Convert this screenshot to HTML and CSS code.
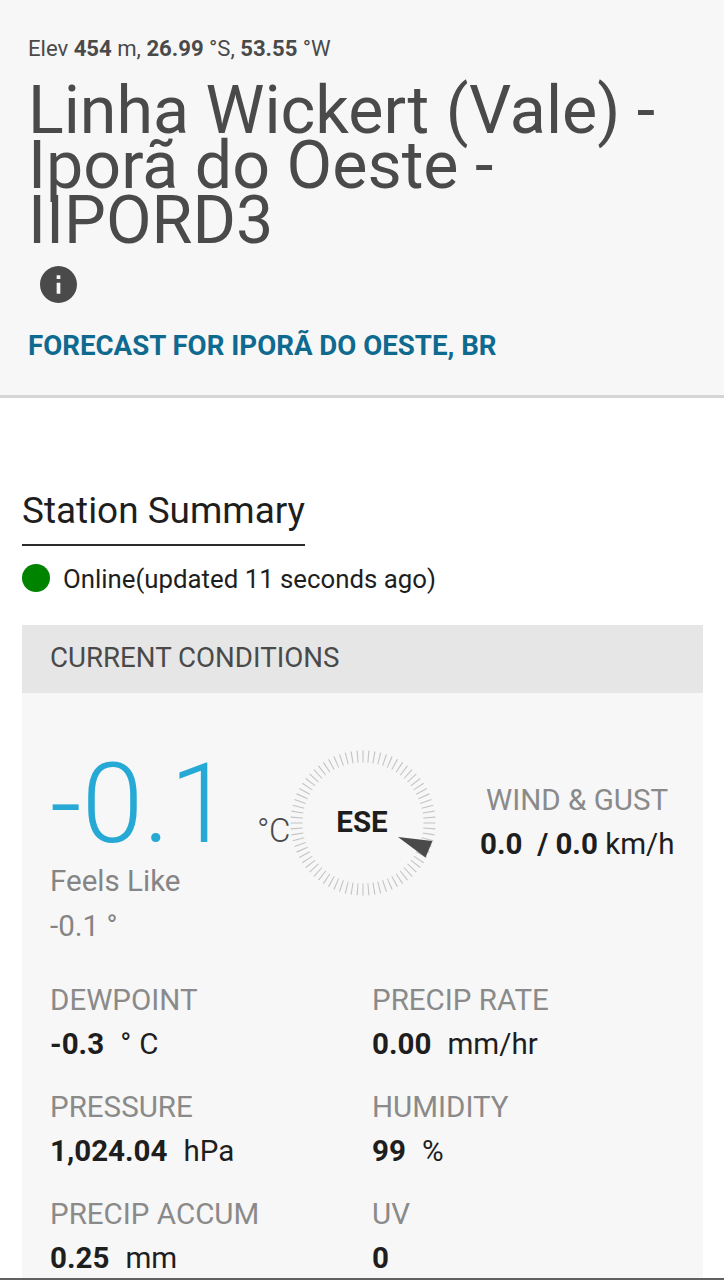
FILE: index.html
```html
<!DOCTYPE html>
<html lang="en">
<head>
<meta charset="utf-8">
<title>Station Summary</title>
<link rel="stylesheet" href="styles.css">
</head>
<body>
<header class="station-header">
  <p class="elev">Elev <b>454</b> m, <b>26.99</b> °S, <b>53.55</b> °W</p>
  <h1 class="station-name">Linha Wickert (Vale) - Iporã do Oeste - IIPORD3</h1>
  <svg class="info" viewBox="2 2 20 20"><path d="M12 2C6.480 2 2 6.480 2 12s4.480 10 10 10 10-4.480 10-10S17.520 2 12 2zm1 15h-2v-6h2v6zm0-8h-2V7h2v2z"/></svg>
  <a class="forecast">FORECAST FOR IPORÃ DO OESTE, BR</a>
</header>
<main class="content">
  <h2 class="summary-title">Station Summary</h2>
  <div class="status"><span class="dot"></span><span>Online(updated 11 seconds ago)</span></div>
  <section class="panel">
    <h3 class="panel-title">CURRENT CONDITIONS</h3>
    <div class="now">
      <div class="temp-block">
        <div class="temp"><span class="temp-value">-0.1</span><span class="temp-unit">°C</span></div>
        <div class="feels">Feels Like</div>
        <div class="feels">-0.1 °</div>
      </div>
      <div class="compass">
        <svg class="dial" viewBox="-73 -73 146 146">
          <circle class="ticks" r="66.500" pathLength="76"/>
          <path class="needle" d="M35 14 69.500 18 62.500 34.500z"/>
        </svg>
        <span class="direction">ESE</span>
      </div>
      <div class="wind">
        <div class="label">WIND &amp; GUST</div>
        <div class="value"><b>0.0 &nbsp;/ 0.0</b> km/h</div>
      </div>
    </div>
    <div class="metrics">
      <div><div class="label">DEWPOINT</div><div class="value"><b>-0.3</b> &nbsp;° C</div></div>
      <div><div class="label">PRECIP RATE</div><div class="value"><b>0.00</b> &nbsp;mm/hr</div></div>
      <div><div class="label">PRESSURE</div><div class="value"><b>1,024.04</b> &nbsp;hPa</div></div>
      <div><div class="label">HUMIDITY</div><div class="value"><b>99</b> &nbsp;%</div></div>
      <div><div class="label">PRECIP ACCUM</div><div class="value"><b>0.25</b> &nbsp;mm</div></div>
      <div><div class="label">UV</div><div class="value"><b>0</b></div></div>
    </div>
  </section>
</main>
<footer class="bottom-edge"></footer>
</body>
</html>
```
FILE: styles.css
```css
* { box-sizing: border-box; margin: 0; padding: 0; }
body {
  width: 724px; height: 1280px; overflow: hidden;
  display: flex; flex-direction: column;
  background: #fff; color: #1e1e1e;
  font-family: Roboto, "Liberation Sans", sans-serif;
}
.station-header {
  flex: none; height: 398px; padding: 33px 28px 0;
  display: flex; flex-direction: column; align-items: flex-start;
  background: #f7f7f7; border-bottom: 3px solid #d5d5d5; color: #4a4a4a;
}
.elev { font-size: 22.150px; line-height: 30px; font-weight: 400; letter-spacing: -0.02px; }
.elev b { font-weight: 700; }
.station-name { margin-top: 20px; font-size: 66.350px; line-height: 55px; font-weight: 400; }
.info { width: 37px; height: 37px; margin: 18px 0 1px 12px; fill: #4a4a4a; }
.forecast { margin-top: 22px; font-size: 27.650px; line-height: 40px; font-weight: 700; color: #0f6a90; white-space: nowrap; }
.content { flex: none; height: 880px; overflow: hidden; padding: 91px 21px 0 22px; }
.summary-title {
  width: fit-content; height: 57px; font-size: 36.920px; line-height: 44px;
  font-weight: 400; border-bottom: 2px solid #2b2b2b;
}
.status { height: 79px; padding-top: 15px; display: flex; gap: 13px; font-size: 25.800px; line-height: 36px; }
.dot { width: 28px; height: 28px; margin-top: 3px; border-radius: 50%; background: #008400; }
.panel { height: 660px; background: #f7f7f7; }
.panel-title { height: 68px; padding-left: 28px; background: #e6e6e6; color: #4a4a4a; font-size: 27.700px; line-height: 66px; font-weight: 400; }
.now { height: 282px; display: flex; padding: 57px 28px 0; }
.temp-block { width: 240px; flex: none; }
.temp { height: 109px; display: flex; align-items: baseline; color: #27a9d6; line-height: 109px; }
.temp-value { width: 210px; font-size: 110.770px; font-weight: 300; }
.temp-unit { font-size: 33px; font-weight: 300; color: #4a4a4a; letter-spacing: -0.5px; }
.feels { color: #858585; font-size: 29.540px; line-height: 44.500px; font-weight: 400; }
.compass { flex: none; width: 146px; height: 146px; display: grid; place-items: center; }
.compass > * { grid-area: 1 / 1; }
.dial { width: 146px; height: 146px; }
.ticks { fill: none; stroke: #c4c4c4; stroke-width: 12; stroke-dasharray: 0.2 0.8; stroke-dashoffset: 0.1; }
.needle { fill: #4a4a4a; }
.direction { margin: -2px 2px 0 0; font-size: 29.540px; font-weight: 700; }
.wind { flex: none; width: 194px; margin: 28px 0 0 44px; text-align: center; white-space: nowrap; }
.label { color: #8a8a8a; font-size: 29.540px; line-height: 44px; font-weight: 400; }
.value { font-size: 29.540px; line-height: 44px; font-weight: 400; }
.value b { font-weight: 700; }
.metrics { display: grid; grid-template-columns: 322px 1fr; grid-auto-rows: 107px; padding: 3px 28px 0; }
.metrics .value { word-spacing: 0.7px; }
.bottom-edge { flex: none; height: 2px; background: #616161; }
```
